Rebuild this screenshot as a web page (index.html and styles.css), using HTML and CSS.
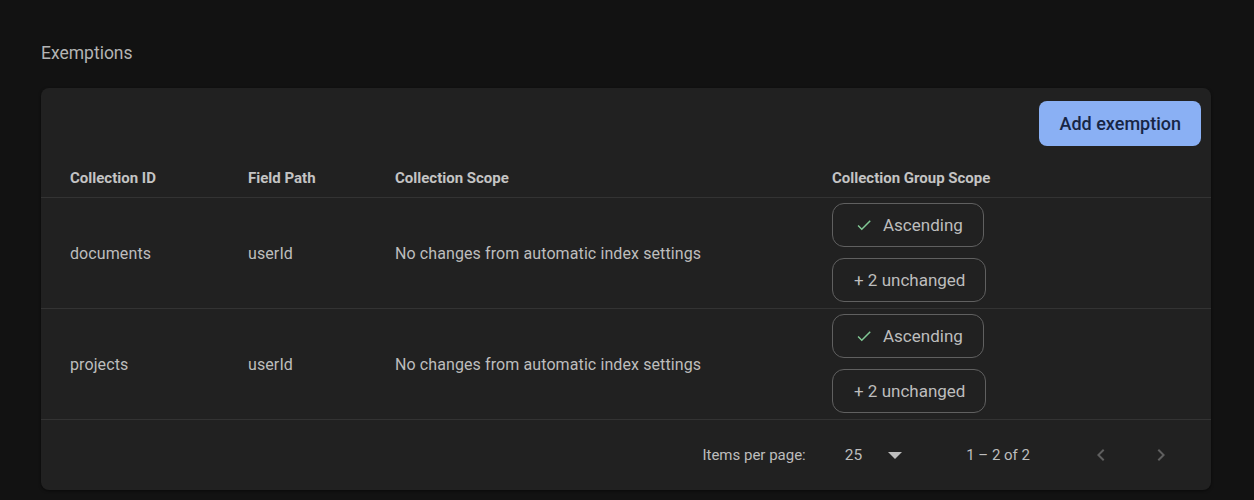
FILE: index.html
```html
<!DOCTYPE html>
<html>
<head>
<meta charset="utf-8">
<link rel="stylesheet" href="styles.css">
</head>
<body>
<main class="page">
  <h2 class="title">Exemptions</h2>
  <section class="card">
    <div class="toolbar">
      <button class="primary">Add exemption</button>
    </div>
    <div class="row head">
      <div>Collection ID</div>
      <div>Field Path</div>
      <div>Collection Scope</div>
      <div>Collection Group Scope</div>
    </div>
    <div class="row body">
      <div>documents</div>
      <div>userId</div>
      <div>No changes from automatic index settings</div>
      <div class="chips">
        <span class="chip"><svg class="check" viewBox="0 0 24 24" width="18" height="18"><path d="M9 16.17L4.83 12l-1.42 1.41L9 19 21 7l-1.41-1.41z" fill="#81c995"/></svg>Ascending</span>
        <span class="chip plain">+ 2 unchanged</span>
      </div>
    </div>
    <div class="row body">
      <div>projects</div>
      <div>userId</div>
      <div>No changes from automatic index settings</div>
      <div class="chips">
        <span class="chip"><svg class="check" viewBox="0 0 24 24" width="18" height="18"><path d="M9 16.17L4.83 12l-1.42 1.41L9 19 21 7l-1.41-1.41z" fill="#81c995"/></svg>Ascending</span>
        <span class="chip plain">+ 2 unchanged</span>
      </div>
    </div>
    <div class="paginator">
      <span class="label">Items per page:</span>
      <span class="select"><span class="value">25</span><svg viewBox="0 0 10 5" width="14" height="7"><path d="M0 0h10L5 5z" fill="#bdbdbd"/></svg></span>
      <span class="range">1 – 2 of 2</span>
      <span class="nav"><svg viewBox="0 0 24 24" width="24" height="24"><path d="M15.41 7.41L14 6l-6 6 6 6 1.41-1.41L10.83 12z" fill="#5f5f5f"/></svg></span>
      <span class="nav"><svg viewBox="0 0 24 24" width="24" height="24"><path d="M10 6L8.59 7.41 13.17 12l-4.58 4.59L10 18l6-6z" fill="#5f5f5f"/></svg></span>
    </div>
  </section>
</main>
</body>
</html>
```
FILE: styles.css
```css
html, body {
  margin: 0;
  padding: 0;
  background: #121212;
  font-family: Roboto, "Liberation Sans", Arial, sans-serif;
  color: #bdbdbd;
}
.page {
  padding: 42px 43px 10px 41px;
}
.title {
  margin: 0 0 24px 0;
  font-size: 17.5px;
  font-weight: 400;
  line-height: 22px;
  color: #b4b4b4;
}
.card {
  background: #212121;
  border-radius: 8px;
  box-shadow: 0 1px 3px rgba(0,0,0,0.5);
}
.toolbar {
  display: flex;
  justify-content: flex-end;
  padding: 13px 10px 11px 0;
}
.primary {
  height: 45px;
  padding: 0 20px 0 21px;
  border: none;
  border-radius: 8px;
  background: #8ab0f4;
  color: #172544;
  font-family: Roboto, "Liberation Sans", Arial, sans-serif;
  font-size: 18px;
  font-weight: 500;
}
.row {
  display: grid;
  grid-template-columns: 178px 147px 437px 1fr;
  padding-left: 29px;
  align-items: center;
  border-bottom: 1px solid #333333;
}
.head {
  height: 41px;
  padding-top: 1px;
  box-sizing: border-box;
  font-size: 15px;
  font-weight: 700;
  color: #c4c4c4;
}
.body {
  height: 110px;
  font-size: 16px;
  letter-spacing: 0.1px;
  color: #bdbdbd;
}
.chips {
  display: flex;
  flex-direction: column;
  align-items: flex-start;
  gap: 11px;
  margin-bottom: 2px;
}
.chip {
  display: inline-flex;
  align-items: center;
  height: 42px;
  padding: 0 20px 0 21px;
  border: 1px solid #606060;
  border-radius: 12px;
  font-size: 17px;
  letter-spacing: 0;
  color: #bdbdbd;
}
.chip .check {
  margin: 0 10px 0 1px;
}
.paginator {
  display: flex;
  align-items: center;
  justify-content: flex-end;
  height: 70px;
  padding-right: 38px;
  font-size: 15px;
}
.label {
  color: #bdbdbd;
}
.select {
  display: inline-flex;
  align-items: center;
  margin-left: 39px;
  font-size: 15.5px;
}
.select svg {
  margin-left: 26px;
}
.range {
  margin-left: 64px;
  font-size: 15px;
}
.nav {
  display: inline-flex;
  width: 24px;
  height: 24px;
}
.range + .nav {
  margin-left: 59px;
}
.nav + .nav {
  margin-left: 36px;
}
```
